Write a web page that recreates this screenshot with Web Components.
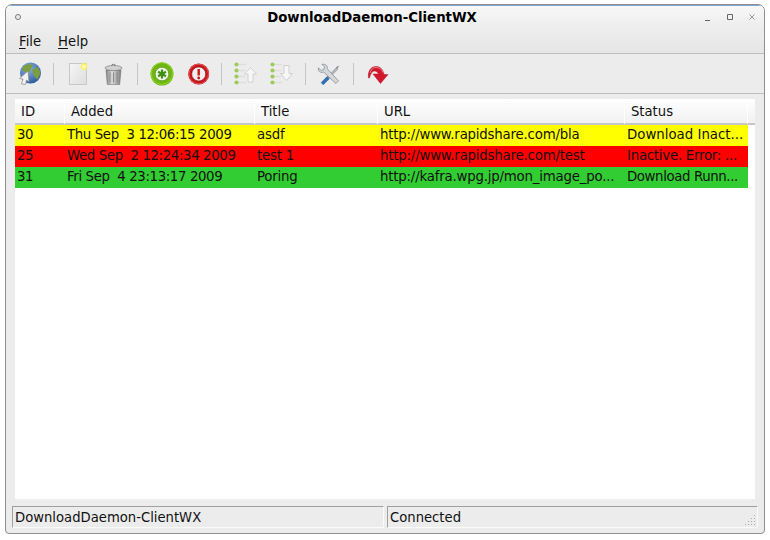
<!DOCTYPE html>
<html>
<head>
<meta charset="utf-8">
<style>
  html, body { margin: 0; padding: 0; background: #fff; }
  body { padding: 4px 0 0 5px; width: 765px; height: 536px; box-sizing: border-box; overflow: hidden; font-family: "DejaVu Sans", sans-serif; font-size: 13.2px; color: #111; }
</style>
</head>
<body>
<dd-window title="DownloadDaemon-ClientWX">
  <dd-menubar></dd-menubar>
  <dd-toolbar></dd-toolbar>
  <dd-list></dd-list>
  <dd-statusbar left="DownloadDaemon-ClientWX" right="Connected"></dd-statusbar>
</dd-window>
<script>
class DDWindow extends HTMLElement {
  constructor() {
    super();
    this.attachShadow({mode: "open"});
    this.shadowRoot.innerHTML = `
    <style>
      :host { display: flex; flex-direction: column; width: 760px; height: 530px; box-sizing: border-box; background: #ececec;
        border: 1px solid #8f8f8f; border-radius: 7px 7px 4px 4px; overflow: hidden; }
      .title { height: 26px; box-sizing: border-box; flex: none; display: flex; align-items: center; border-top: 1px solid #7fa8d8; background: linear-gradient(#f7f7f7, #ececec); }
      .title b { flex: 1; text-align: center; font-size: 13.3px; color: #000; padding-left: 21px; margin-top: -3px; }
      .dot { width: 4px; height: 4px; border: 1px solid #777; border-radius: 50%; margin: -3px 0 0 9px; background: #eee; }
      .btns { display: flex; gap: 10px; padding-right: 6px; align-items: center; margin-top: -3px; }
      svg { display: block; }
    </style>
    <div class="title">
      <span class="dot"></span>
      <b>${this.getAttribute("title")}</b>
      <div class="btns">
        <svg width="12" height="12"><path d="M3 9.500h5" stroke="#666"/></svg>
        <svg width="12" height="12"><path d="M3.500 3.500h5v5h-5z" fill="none" stroke="#666"/></svg>
        <svg width="12" height="12"><path d="M3.500 3.500l5 5M8.500 3.500l-5 5" stroke="#999"/></svg>
      </div>
    </div>
    <slot></slot>`;
  }
}
class DDMenubar extends HTMLElement {
  constructor() {
    super();
    this.attachShadow({mode: "open"});
    this.shadowRoot.innerHTML = `
    <style>
      :host { display: flex; height: 23px; flex: none; box-sizing: border-box; gap: 17px; padding: 0 0 2px 13px; align-items: center; background: linear-gradient(#ececec, #e6e6e6); border-bottom: 1px solid #bdbdbd; line-height: 17px; }
      u { text-underline-offset: 2px; }
    </style>
    <span><u>F</u>ile</span><span><u>H</u>elp</span>`;
  }
}
const ICONS = {
  globe: `<defs><radialGradient id="g1" cx=".4" cy=".3" r=".8"><stop offset="0" stop-color="#8db4e0"/><stop offset="1" stop-color="#234f9a"/></radialGradient></defs>
    <circle cx="12.500" cy="11" r="10.500" fill="url(#g1)"/>
    <path d="M6 4c3-2.500 6-2 9-1l-2 4-2 4-4-1-3-2zM14 8l6-3 2.500 6-3 6.500-3-3z" fill="#7d9e3c"/>
    <path d="M10 9L1.500 16.500 5 17 3.500 22 7.500 22.500 8.500 18 11 20z" fill="#f2f2f2" stroke="#8a8a8a" stroke-width=".7"/>`,
  doc: `<defs><radialGradient id="g2"><stop offset="0" stop-color="#fffef0"/><stop offset=".55" stop-color="#fdf06a"/><stop offset="1" stop-color="#fdf06a" stop-opacity="0"/></radialGradient><linearGradient id="g3" x1="0" y1="0" x2="1" y2="1"><stop offset="0" stop-color="#f6f6f6"/><stop offset="1" stop-color="#dddddd"/></linearGradient></defs>
    <rect x="3.500" y="1.500" width="17" height="21" fill="url(#g3)" stroke="#c8c8c8"/>
    <circle cx="18" cy="4.500" r="4.500" fill="url(#g2)"/>`,
  trash: `<defs><linearGradient id="g4"><stop offset="0" stop-color="#7f7f7f"/><stop offset=".4" stop-color="#dcdcdc"/><stop offset="1" stop-color="#7f7f7f"/></linearGradient></defs>
    <path d="M4 8h15l-1.300 14.500h-12.400z" fill="url(#g4)" stroke="#777" stroke-width=".6"/>
    <path d="M8 10.500v10M11.500 10.500v10M15 10.500v10" stroke="#8a8a8a"/>
    <ellipse cx="11.500" cy="6" rx="8.500" ry="2.500" fill="#d2d2d2" stroke="#808080" stroke-width=".7"/>
    <path d="M9.500 3.800a2 1.500 0 0 1 4 0" fill="none" stroke="#808080"/>`,
  add: `<circle cx="12" cy="12" r="11.500" fill="#6fb612"/><circle cx="12" cy="11.500" r="10.800" fill="none" stroke="#93d42f" stroke-width="1"/>
    <circle cx="12" cy="12" r="6.800" fill="#f0f4ea" stroke="#4f8a0d" stroke-width=".6"/>
    <path d="M12 7.500v9M8.100 9.750l7.800 4.500M15.900 9.750l-7.800 4.500" stroke="#3f8f12" stroke-width="2.200"/>`,
  stop: `<circle cx="12.700" cy="12" r="10.500" fill="#c9151b"/><circle cx="12.700" cy="12" r="9.800" fill="none" stroke="#e2555a"/>
    <circle cx="12.700" cy="12" r="7" fill="#f3eeee" stroke="#8e1013" stroke-width=".6"/>
    <path d="M12.700 7v6.500" stroke="#c9151b" stroke-width="2.400"/><circle cx="12.700" cy="16" r="1.400" fill="#c9151b"/>`,
  up: `<g fill="#9ccb5a"><circle cx="2.500" cy="2.500" r="2.100"/><circle cx="2.500" cy="8.500" r="2.100"/><circle cx="2.500" cy="14.500" r="2.100"/><circle cx="2.500" cy="20.500" r="2.100"/></g>
    <path d="M5 2.500h7M5 8.500h6M5 14.500h6M5 20.500h7" stroke="#ddd" stroke-width="1.300"/>
    <path d="M16.500 5.500l6 6.500h-3.500v8h-5v-8h-3.500z" fill="#f7f7f7" stroke="#d0d0d0"/>`,
  down: `<g fill="#9ccb5a"><circle cx="2.500" cy="2.500" r="2.100"/><circle cx="2.500" cy="8.500" r="2.100"/><circle cx="2.500" cy="14.500" r="2.100"/><circle cx="2.500" cy="20.500" r="2.100"/></g>
    <path d="M5 2.500h7M5 8.500h6M5 14.500h6M5 20.500h7" stroke="#ddd" stroke-width="1.300"/>
    <path d="M14 3.500h5v8h3.500l-6 7-6-7h3.500z" fill="#f7f7f7" stroke="#d0d0d0"/>`,
  tools: `<g transform="translate(.5 1.500) scale(.87)">
    <path d="M6 21l15-15" stroke="#aeb3b8" stroke-width="3.400" stroke-linecap="round"/>
    <path d="M20.500 5.500L23 3" stroke="#888" stroke-width="1.500"/>
    <path d="M6 10l14 13 3-3-13-14c1-3-2-6-6-5l3 3-1 3-3 1-3-3c-1 4 2 6 6 5z" fill="#d5d8db" stroke="#7d8287" stroke-width=".8"/>
    <path d="M3 22l7-7 2.500 2.500-7 7z" fill="#2f6fbb" stroke="#24568f" stroke-width=".5"/></g>`,
  redo: `<path d="M2.500 16C1.500 9 5 4.500 10 4.500c4 0 7 2.500 8 8h4l-7.500 9L7 12h5.500c-1-2-2.500-3-4-3-2.500 0-4 3-5 7z" fill="#d3162c" stroke="#b5172a" stroke-width=".5"/>
    <path d="M4 11c1-3.500 3-5.500 6-5.500 3 0 6 1.500 7 5" fill="none" stroke="#ee7c88" stroke-width="1"/>`
};
class DDTool extends HTMLElement {
  constructor() {
    super();
    this.attachShadow({mode: "open"});
    this.shadowRoot.innerHTML = `
    <style>
      :host { display: block; width: 24px; height: 24px; flex: none; }
      svg { display: block; overflow: visible; }
    </style>
    <svg width="24" height="24" viewBox="0 0 24 24">${ICONS[this.getAttribute("icon")]}</svg>`;
  }
}
class DDSep extends HTMLElement {
  constructor() {
    super();
    this.attachShadow({mode: "open"});
    this.shadowRoot.innerHTML = `<style>:host { display: block; width: 1px; height: 22px; flex: none; background: #c4c4c4; }</style>`;
  }
}
class DDToolbar extends HTMLElement {
  constructor() {
    super();
    this.attachShadow({mode: "open"});
    this.shadowRoot.innerHTML = `
    <style>
      :host { display: flex; height: 40px; flex: none; box-sizing: border-box; padding: 0 0 0 12px; align-items: center; background: #ececec; border-bottom: 1px solid #bdbdbd; }
      dd-tool { margin-right: 12px; }
      dd-sep { margin: 0 12px 0 -1px; }
    </style>
    <dd-tool icon="globe"></dd-tool><dd-sep></dd-sep>
    <dd-tool icon="doc"></dd-tool><dd-tool icon="trash"></dd-tool><dd-sep></dd-sep>
    <dd-tool icon="add"></dd-tool><dd-tool icon="stop"></dd-tool><dd-sep></dd-sep>
    <dd-tool icon="up"></dd-tool><dd-tool icon="down"></dd-tool><dd-sep></dd-sep>
    <dd-tool icon="tools"></dd-tool><dd-sep></dd-sep>
    <dd-tool icon="redo"></dd-tool>`;
  }
}
const COLUMNS = ["ID", "Added", "Title", "URL", "Status"];
const ROWS = [
  ["#ffff00", "30", "Thu Sep  3 12:06:15 2009", "asdf", "http://www.rapidshare.com/bla", "Download Inact..."],
  ["#ff0000", "25", "Wed Sep  2 12:24:34 2009", "test 1", "http://www.rapidshare.com/test", "Inactive. Error: ..."],
  ["#32cd32", "31", "Fri Sep  4 23:13:17 2009", "Poring", "http://kafra.wpg.jp/mon_image_po...", "Download Runn..."]
];
class DDList extends HTMLElement {
  constructor() {
    super();
    this.attachShadow({mode: "open"});
    const cells = r => r.slice(1).map(t => `<span>${t}</span>`).join("");
    this.shadowRoot.innerHTML = `
    <style>
      :host { display: block; flex: 1; min-height: 0; margin: 5px 9px 0 9px; background: #fff; --cols: 50px 190px 123px 247px 123px; }
      .head { display: grid; grid-template-columns: var(--cols) 7px; height: 26px; box-sizing: border-box; border-bottom: 2px solid #c6c6c6; background: linear-gradient(#fff, #f1f1f1); }
      .head span { padding-left: 6px; line-height: 25px; border-right: 1px solid #fff; white-space: pre; }
      .row { display: grid; grid-template-columns: var(--cols); height: 21px; line-height: 19px; width: 733px; font-size: 13.33px; letter-spacing: -.2px; }
      .row span { padding-left: 2px; white-space: pre; }
      .row span:nth-child(1) { letter-spacing: -.4px; }
      .row span:nth-child(2) { letter-spacing: -.38px; }
      .row:nth-of-type(2) span:nth-child(5) { letter-spacing: 0; }
      .row:nth-of-type(3) span:nth-child(5) { letter-spacing: -.25px; }
      .row:nth-of-type(4) span:nth-child(5) { letter-spacing: -.4px; }
    </style>
    <div class="head">${COLUMNS.map(c => `<span>${c}</span>`).join("")}<i></i></div>
    ${ROWS.map(r => `<div class="row" style="background:${r[0]}">${cells(r)}</div>`).join("")}`;
  }
}
class DDStatusbar extends HTMLElement {
  constructor() {
    super();
    this.attachShadow({mode: "open"});
    this.shadowRoot.innerHTML = `
    <style>
      :host { display: flex; height: 22px; flex: none; gap: 3px; margin: 7px 6px 5px 6px; }
      div { box-sizing: border-box; height: 22px; line-height: 22px; padding-left: 2px; border: 1px solid #fbfbfb; border-top-color: #a0a0a0; border-left-color: #a0a0a0; position: relative; }
      .a { width: 372px; } .b { flex: 1; }
      svg { position: absolute; right: 1px; bottom: 1px; }
    </style>
    <div class="a">${this.getAttribute("left")}</div>
    <div class="b">${this.getAttribute("right")}
      <svg width="11" height="11"><path d="M9.500 0v1M9.500 3v1M9.500 6v1M9.500 9v1M6.500 3v1M6.500 6v1M6.500 9v1M3.500 6v1M3.500 9v1M0.500 9v1" stroke="#aaa"/></svg>
    </div>`;
  }
}
customElements.define("dd-window", DDWindow);
customElements.define("dd-menubar", DDMenubar);
customElements.define("dd-tool", DDTool);
customElements.define("dd-sep", DDSep);
customElements.define("dd-toolbar", DDToolbar);
customElements.define("dd-list", DDList);
customElements.define("dd-statusbar", DDStatusbar);
</script>
</body>
</html>
